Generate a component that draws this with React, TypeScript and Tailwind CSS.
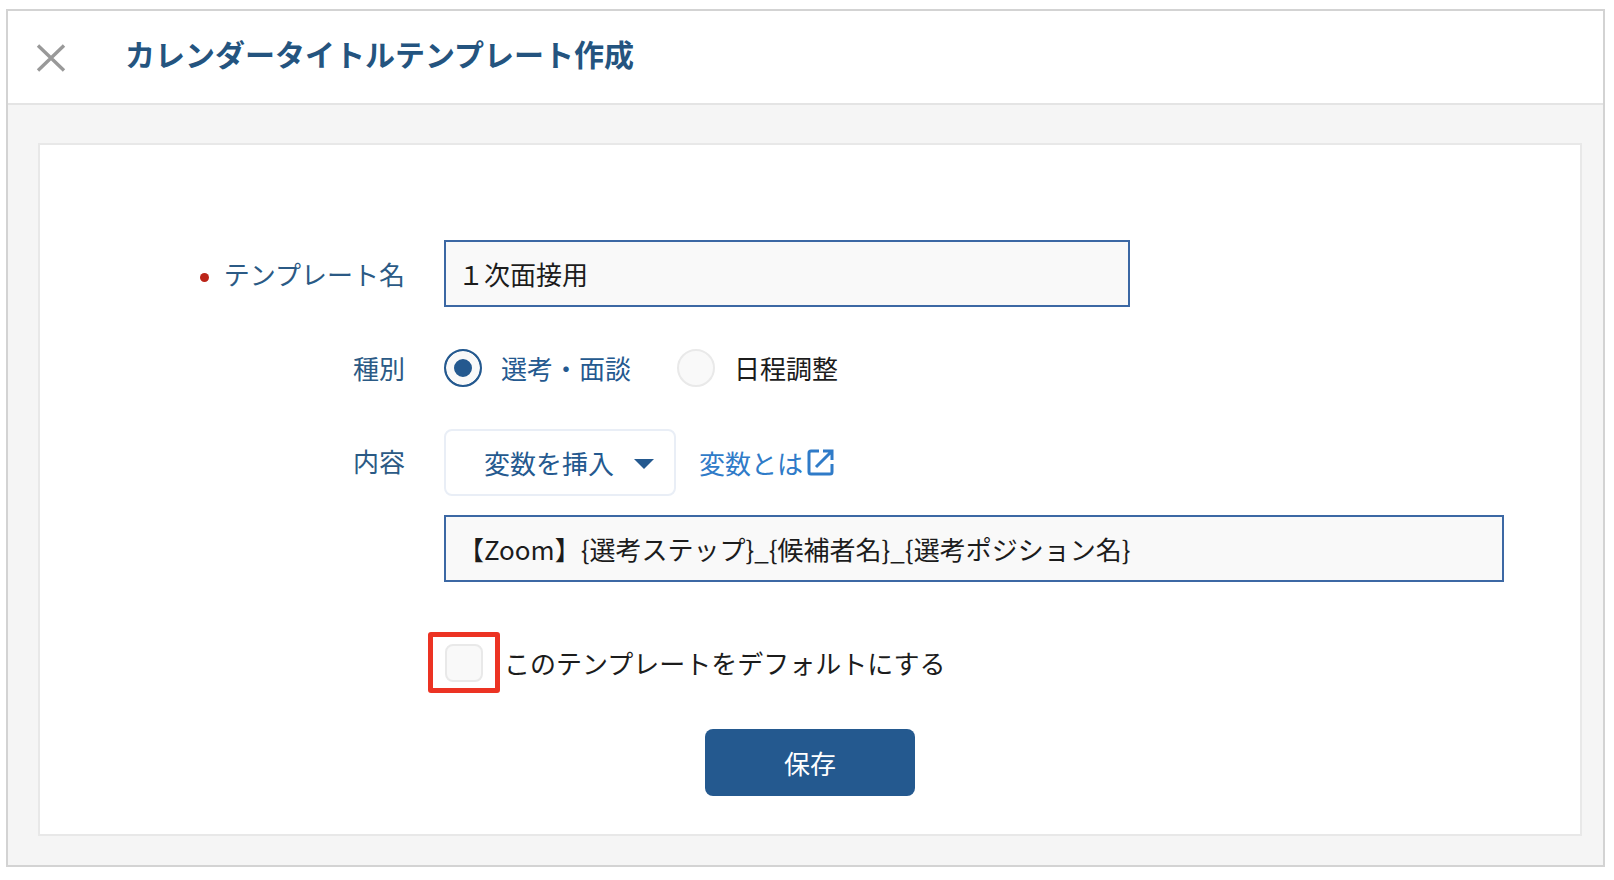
import { useState } from "react";

const fieldClass =
  "h-[67px] border-2 border-[#3c68a4] bg-[#f9f9f9] px-3 text-[26px] text-[#1c1c1c] outline-none";
const labelClass = "w-[366px] shrink-0 pr-[1px] text-right text-[26px] leading-8 text-[#2b5a85]";
const radioClass =
  "size-[38px] shrink-0 appearance-none rounded-full border-2 border-[#e9e9e9] bg-[#f9f9f9] checked:border-[#24598f] checked:bg-[#24598f] checked:shadow-[inset_0_0_0_8px_#f9f9f9]";

function Header() {
  return (
    <header className="flex h-[94px] items-center border-b-2 border-[#e4e4e4] bg-white pl-7">
      <button type="button" aria-label="閉じる" className="mt-[2px]">
        <svg className="size-[30px]" viewBox="0 0 30 30" fill="none" stroke="#999" strokeWidth="3.4">
          <path d="M2 2.5L28 27.5M28 2.5L2 27.5" />
        </svg>
      </button>
      <h1 className="ml-[59px] pb-2 text-[30px] leading-9 font-bold text-[#24547f]">
        カレンダータイトルテンプレート作成
      </h1>
    </header>
  );
}

function App() {
  const [name, setName] = useState("１次面接用");
  const [kind, setKind] = useState("selection");
  const [content, setContent] = useState("【Zoom】{選考ステップ}_{候補者名}_{選考ポジション名}");
  const [isDefault, setIsDefault] = useState(false);

  return (
    <div className="min-h-screen bg-white pt-[9px] pr-[9px] pb-[13px] pl-[6px] font-['Noto_Sans_CJK_JP',sans-serif]">
      <div className="border-2 border-[#d3d3d3] bg-[#f5f5f5]">
        <Header />

        <main className="pt-[38px] pr-[21px] pb-[29px] pl-[30px]">
          <form
            className="flex flex-col border-2 border-[#e8e8e8] bg-white pt-[95px] pr-[76px] pb-[38px]"
            onSubmit={(e) => e.preventDefault()}
          >
            <div className="flex items-center gap-[38px]">
              <label htmlFor="name" className={labelClass}>
                <span className="mr-[15px] inline-block size-[9px] rounded-full bg-[#bb2418] align-middle" />
                テンプレート名
              </label>
              <input
                id="name"
                type="text"
                className={`${fieldClass} w-[686px]`}
                value={name}
                onChange={(e) => setName(e.target.value)}
              />
            </div>

            <div role="radiogroup" aria-labelledby="kind" className="mt-[42px] flex items-center gap-[38px]">
              <span id="kind" className={labelClass}>種別</span>
              <div className="flex items-center gap-[46px] text-[26px] leading-8">
                <label className="flex items-center gap-[19px] text-[#1c1c1c] has-checked:text-[#24598f]">
                  <input
                    type="radio"
                    name="kind"
                    className={radioClass}
                    checked={kind === "selection"}
                    onChange={() => setKind("selection")}
                  />
                  選考・面談
                </label>
                <label className="flex items-center gap-[19px] text-[#1c1c1c] has-checked:text-[#24598f]">
                  <input
                    type="radio"
                    name="kind"
                    className={radioClass}
                    checked={kind === "schedule"}
                    onChange={() => setKind("schedule")}
                  />
                  日程調整
                </label>
              </div>
            </div>

            <div className="mt-[42px] flex gap-[38px]">
              <label htmlFor="content" className={`${labelClass} pt-4`}>内容</label>
              <div className="flex grow flex-col gap-[19px]">
                <div className="flex items-center gap-[23px]">
                  <div className="relative">
                    <select
                      aria-label="変数を挿入"
                      className="h-[67px] w-[232px] appearance-none rounded-lg border-2 border-[#e9eef6] bg-white pl-[38px] text-[26px] text-[#24598f]"
                    >
                      <option>変数を挿入</option>
                    </select>
                    <svg
                      className="pointer-events-none absolute top-[30px] right-[22px] h-[10px] w-[20px]"
                      viewBox="0 0 20 10"
                      fill="#24598f"
                    >
                      <path d="M0 0H20L10 10Z" />
                    </svg>
                  </div>
                  <a href="#" className="flex items-center gap-1 text-[26px] leading-8 text-[#2f7bc8]">
                    変数とは
                    <svg className="size-[27px]" viewBox="0 0 27 27" fill="none" stroke="currentColor" strokeWidth="3">
                      <path d="M12 2H4Q2 2 2 4V23Q2 25 4 25H23Q25 25 25 23V15" />
                      <path d="M16 2H25V11M25 2L9 18" />
                    </svg>
                  </a>
                </div>
                <input
                  id="content"
                  type="text"
                  className={`${fieldClass} w-full`}
                  value={content}
                  onChange={(e) => setContent(e.target.value)}
                />
              </div>
            </div>

            <div className="mt-[50px] flex items-center gap-1 pl-[388px]">
              <span className="flex h-[61px] w-[72px] items-center justify-center rounded-[3px] border-[5px] border-[#ec3323]">
                <input
                  id="default"
                  type="checkbox"
                  className="size-[38px] appearance-none rounded-lg border-2 border-[#e9e9e9] bg-[#f9f9f9] checked:bg-[#24598f]"
                  checked={isDefault}
                  onChange={(e) => setIsDefault(e.target.checked)}
                />
              </span>
              <label htmlFor="default" className="text-[26px] leading-8 text-[#1c1c1c]">
                このテンプレートをデフォルトにする
              </label>
            </div>

            <button
              type="submit"
              className="mt-9 -mr-[76px] h-[67px] w-[210px] self-center rounded-lg bg-[#24598f] text-[26px] text-white"
            >
              保存
            </button>
          </form>
        </main>
      </div>
    </div>
  );
}

export default App;
